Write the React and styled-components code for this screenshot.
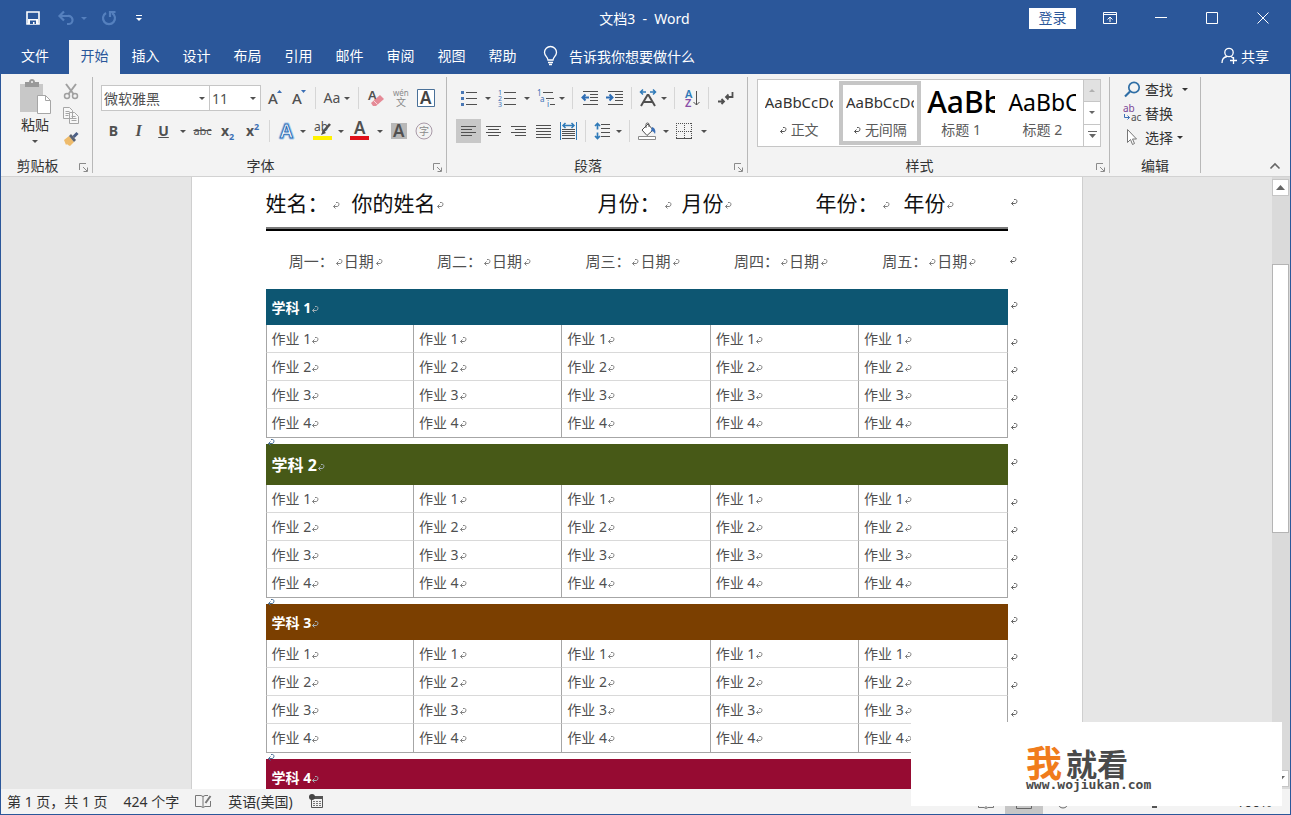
import { Fragment } from "react";
import styled, { createGlobalStyle, css } from "styled-components";

const GlobalStyle = createGlobalStyle`
  * {
    box-sizing: border-box;
  }

  body {
    margin: 0;
    font-family: "Noto Sans", "Noto Sans CJK SC", sans-serif;
    font-size: 14px;
    color: #333;
  }

  button, input, select {
    font: inherit;
    color: inherit;
    border: 0;
    padding: 0;
    background: none;
  }
`;

const Window = styled.div`
  display: flex;
  flex-direction: column;
  height: 100vh;
  border: 1px solid #2b579a;
  background-color: #e6e6e6;
  overflow: hidden;
`;

/* ---------- title bar ---------- */

const TitleBar = styled.header`
  display: grid;
  grid-template-columns: 1fr auto 1fr;
  align-items: center;
  height: 36px;
  padding: 0 2px 2px 0;
  background-color: #2b579a;
  color: white;
`;

const QuickAccess = styled.div`
  display: flex;
  align-items: center;
  padding-left: 20px;
`;

const QuickButton = styled.button`
  display: flex;
  align-items: center;
  justify-content: center;
  gap: 7px;
  width: ${(p) => p.$w || 24}px;
  height: 28px;
  color: ${(p) => (p.$dim ? "#5580be" : "white")};
`;

const Title = styled.h1`
  margin: 0;
  font-size: 14px;
  font-weight: 400;
  white-space: pre;
`;

const WindowButtons = styled.div`
  display: flex;
  align-items: center;
  justify-content: flex-end;
`;

const Login = styled.button`
  width: 47px;
  height: 21px;
  margin-right: 8px;
  line-height: 20px;
  background-color: white;
  color: #2b579a;
`;

const WindowButton = styled.button`
  display: flex;
  align-items: center;
  justify-content: center;
  width: 51px;
  height: 34px;
`;

/* ---------- tabs ---------- */

const Tabs = styled.nav`
  display: flex;
  align-items: stretch;
  height: 37px;
  padding-top: 3px;
  background-color: #2b579a;
  color: white;
`;

const Tab = styled.button`
  width: ${(p) => (p.$file ? 68 : 51)}px;
  padding-bottom: 5px;

  ${(p) =>
    p.$active &&
    css`
      background-color: #f3f3f3;
      color: #2b579a;
    `}
`;

const TellMe = styled.label`
  display: flex;
  align-items: center;
  gap: 11px;
  flex: 1;
  padding: 0 0 2px 15px;
`;

const TellInput = styled.input`
  flex: 1;
  min-width: 0;
  outline: 0;

  &::placeholder {
    color: white;
    opacity: 1;
  }
`;

const Share = styled.button`
  display: flex;
  align-items: center;
  gap: 3px;
  padding: 0 21px 2px 0;
`;

/* ---------- ribbon ---------- */

const Ribbon = styled.section`
  display: flex;
  padding: 3px 0;
  background-color: #f3f3f3;
  border-bottom: 1px solid #d2d2d2;
`;

const Group = styled.div`
  display: flex;
  flex-direction: column;
  flex: none;
  width: ${(p) => p.$w}px;
  height: 96px;
  border-right: 1px solid #b8b8b8;
`;

const GroupBody = styled.div`
  display: flex;
  flex-direction: ${(p) => (p.$row ? "row" : "column")};
  flex: 1;
  gap: ${(p) => p.$gap || 0}px;
  padding: ${(p) => p.$pad || "8px 8px 0"};
`;

const GroupFooter = styled.div`
  display: flex;
  align-items: center;
  height: 14px;
  line-height: 14px;
`;

const GroupLabel = styled.span`
  flex: 1;
  text-align: center;
`;

const Launcher = styled.button`
  display: flex;
  justify-content: center;
  width: 18px;
  padding-top: 3px;
`;

const Row = styled.div`
  display: flex;
  align-items: center;
  height: 26px;
`;

const Separator = styled.i`
  width: 1px;
  height: 22px;
  margin: 0 4px;
  background-color: #d6d6d6;
`;

const Tool = styled.button`
  display: flex;
  align-items: center;
  justify-content: center;
  gap: ${(p) => p.$gap || 4}px;
  flex: none;
  width: ${(p) => p.$w || 25}px;
  height: 24px;
  color: #505050;
  white-space: nowrap;
  background-color: ${(p) => (p.$on ? "#c8c8c8" : "transparent")};
`;

const Letter = styled.span`
  font-size: ${(p) => p.$size || 14}px;
  font-weight: ${(p) => (p.$bold ? 700 : 400)};
  font-style: ${(p) => (p.$italic ? "italic" : "normal")};
  font-family: ${(p) => (p.$serif ? '"Liberation Serif", serif' : "inherit")};
  text-decoration: ${(p) => p.$line || "none"};
  line-height: 18px;

  sub, sup {
    font-size: 9px;
    line-height: 0;
    color: #3b6fb5;
  }
`;

const Combo = styled.label`
  display: flex;
  align-items: center;
  width: ${(p) => p.$w}px;
  height: 26px;
  padding: 0 4px 0 2px;
  margin-right: -1px;
  border: 1px solid #c6c6c6;
  background-color: white;
  color: #505050;
`;

const ComboSelect = styled.select`
  flex: 1;
  min-width: 0;
  appearance: none;
  outline: 0;
`;

const ComboEnd = styled.span`
  width: 3px;
`;

const Paste = styled.button`
  display: flex;
  flex-direction: column;
  align-items: center;
  width: 42px;
  color: #505050;
`;

const PasteLabel = styled.span`
  margin-bottom: 5px;
  line-height: 20px;
  color: #333;
`;

const ToolColumn = styled.div`
  display: flex;
  flex-direction: column;
`;

const Gallery = styled.div`
  display: flex;
  height: 68px;
  border: 1px solid #c6c6c6;
  background-color: white;
`;

const StyleCard = styled.button`
  display: flex;
  flex-direction: column;
  align-items: center;
  justify-content: space-between;
  flex: 1;
  min-width: 0;
  margin: 1px 0;
  padding: 0 2px 1px;
  border: 4px solid ${(p) => (p.$on ? "#c6c6c6" : "transparent")};
`;

const Preview = styled.span`
  width: 68px;
  height: 34px;
  line-height: 34px;
  overflow: hidden;
  text-align: left;
  white-space: nowrap;
  font-size: ${(p) => p.$size}px;
  font-weight: ${(p) => (p.$size > 26 ? 500 : 400)};
  color: ${(p) => (p.$size > 20 ? "#000" : "#333")};
`;

const StyleName = styled.span`
  display: flex;
  align-items: center;
  gap: 4px;
  font-size: 14px;
  line-height: 20px;
  white-space: nowrap;
  color: #5a5a5a;
`;

const GalleryScroll = styled.div`
  display: flex;
  flex-direction: column;
  width: 17px;
  border-left: 1px solid #c6c6c6;
`;

const GalleryArrow = styled.button`
  display: flex;
  flex-direction: column;
  align-items: center;
  justify-content: center;
  gap: 2px;
  flex: 1;
  color: ${(p) => (p.disabled ? "#b0b0b0" : "#666")};
  background-color: ${(p) => (p.disabled ? "#e1e1e1" : "white")};

  & + & {
    border-top: 1px solid #c6c6c6;
  }
`;

const EditButton = styled.button`
  display: flex;
  align-items: center;
  gap: 4px;
  height: 24px;
`;

const EditIcon = styled.span`
  display: flex;
  align-items: center;
  justify-content: center;
  width: 18px;
`;

const EditText = styled.span`
  margin-right: ${(p) => (p.$wide ? 5 : 0)}px;
`;

const Collapse = styled.button`
  align-self: flex-end;
  width: 18px;
  height: 18px;
  margin: 0 6px 0 auto;
  color: #666;
`;

/* ---------- document ---------- */

const Workspace = styled.main`
  display: flex;
  flex: 1;
  min-height: 0;
`;

const Canvas = styled.div`
  flex: 1;
  min-width: 0;
  overflow: hidden;
`;

const Page = styled.article`
  width: 890px;
  max-width: 100%;
  min-height: 100%;
  margin: 0 auto;
  padding: 0 58px 0 74px;
  background-color: white;
  box-shadow: 0 0 0 1px #cfcfcf;
`;

const MarkSvg = styled.svg`
  width: 8px;
  height: 8px;
  flex: none;
  color: ${(p) => p.$color || "#808080"};
`;

const PageHead = styled.div`
  display: grid;
  grid-template-columns: 86fr 246fr 84fr 134fr 88fr 104fr 16px;
  align-items: center;
  height: 50px;
  font-size: 21px;
  color: #111;
`;

const MarkedText = styled.span`
  display: flex;
  align-items: center;
  gap: ${(p) => p.$gap || 0}px;
  white-space: nowrap;

  ${MarkSvg} {
    margin-top: 6px;
  }
`;

const LineEnd = styled.span`
  display: flex;
  padding-left: 2px;
`;

const Rule = styled.hr`
  height: 4px;
  margin: 0 16px 0 0;
  border: 0;
  border-top: 2px solid #7a7a7a;
  border-bottom: 2px solid #000;
`;

const Weekdays = styled.div`
  display: grid;
  grid-template-columns: repeat(5, 1fr) 16px;
  align-items: center;
  height: 58px;
  font-size: 15px;
  color: #505050;
`;

const Weekday = styled.span`
  display: flex;
  align-items: center;
  justify-content: center;
  gap: 1px;
  padding-right: 8px;
  white-space: nowrap;

  ${MarkSvg} {
    margin-top: 4px;
  }
`;

const Subject = styled.table`
  width: 100%;
  table-layout: fixed;
  border-spacing: 0;
`;

const MarkCol = styled.col`
  width: 16px;
`;

const SubjectTitle = styled.th`
  height: ${(p) => (p.$large ? 41 : 36)}px;
  padding: 0 6px 1px;
  text-align: left;
  font-size: ${(p) => (p.$large ? 16 : 14)}px;
  color: white;
  background-color: ${(p) => p.$color};
`;

const Task = styled.td`
  height: 28px;
  padding: 0 5px;
  line-height: 20px;
  color: #505050;
  border-right: 1px solid #a6a6a6;
  border-bottom: 1px solid #d9d9d9;

  &:first-child {
    border-left: 1px solid #a6a6a6;
  }

  tr:last-child > & {
    height: 29px;
    border-bottom-color: #a6a6a6;
  }
`;

const RowEnd = styled.td`
  padding: ${(p) => (p.$head ? "0 0 6px 2px" : "4px 0 0 2px")};
  line-height: 8px;
`;

const Between = styled.div`
  height: 6px;
  padding-left: 1px;
  line-height: 0;
`;

const ScrollBar = styled.aside`
  display: flex;
  flex-direction: column;
  width: 18px;
  padding: 2px 1px 2px 0;
  background-color: #dadada;
`;

const ScrollArrow = styled.button`
  display: flex;
  align-items: center;
  justify-content: center;
  height: 17px;
  border: 1px solid #c6c6c6;
  background-color: white;
  color: #666;
`;

const Track = styled.div`
  flex: ${(p) => p.$grow};
`;

const Thumb = styled.div`
  flex: 269;
  border: 1px solid #b4b4b4;
  background-color: white;
`;

/* ---------- status bar ---------- */

const StatusBar = styled.footer`
  display: flex;
  align-items: center;
  height: 25px;
  padding: 0 6px;
  background-color: #f3f3f3;
  white-space: nowrap;
`;

const StatusLeft = styled.div`
  display: flex;
  align-items: center;
  gap: 16px;
  flex: 1;
  padding-bottom: 2px;
`;

const StatusRight = styled.div`
  display: flex;
  align-items: center;
  padding-right: 12px;
`;

const ViewButton = styled.button`
  display: flex;
  align-items: center;
  justify-content: center;
  width: 38px;
  height: 25px;
  background-color: ${(p) => (p.$on ? "#c6c6c6" : "transparent")};
`;

const Zoom = styled.input`
  width: 110px;
  height: 14px;
  margin: 0 27px 0 18px;
  appearance: none;
  background: linear-gradient(#8a8a8a, #8a8a8a) center / 100% 1px no-repeat;

  &::-webkit-slider-thumb {
    appearance: none;
    width: 5px;
    height: 13px;
    background-color: #555;
  }
`;

const Watermark = styled.div`
  position: fixed;
  right: 9px;
  bottom: 9px;
  display: flex;
  flex-direction: column;
  width: 371px;
  height: 84px;
  padding: 28px 0 0 115px;
  background-color: white;
  color: #4a4a4a;
`;

const Brand = styled.div`
  display: flex;
  align-items: center;
  gap: 4px;
  height: 28px;
  font-size: 31px;
  font-weight: 700;
  line-height: 28px;
`;

const BrandAccent = styled.span`
  font-size: 36px;
  color: #f07c1c;
`;

const Site = styled.span`
  font-family: "DejaVu Sans Mono", monospace;
  font-size: 13px;
  font-weight: 700;
  line-height: 14px;
`;

/* ---------- icons ---------- */

const Drawing = styled.svg`
  flex: none;
  overflow: visible;
`;

const Svg = ({ w = 20, h = w, children }) => (
  <Drawing
    width={w}
    height={h}
    viewBox={`0 0 ${w} ${h}`}
    fill="none"
    stroke="currentColor"
    aria-hidden="true"
  >
    {children}
  </Drawing>
);

const Caret = () => (
  <Svg w={6} h={3}>
    <path d="M0 0h6L3 3z" fill="currentColor" stroke="none" />
  </Svg>
);

const Mark = ({ color }) => (
  <MarkSvg $color={color} viewBox="0 0 8 8" fill="none" stroke="currentColor">
    <path d="M4 1.500h1.500c2 0 2 4-.5 4H1.500M3.500 3.500l-2 2 2 2" />
  </MarkSvg>
);

const Lines = ({ rows }) => (
  <path d={rows.map(([x, y, w]) => `M${x} ${y}.5h${w}`).join("")} />
);

const SaveIcon = () => (
  <Svg w={16}>
    <path d="M2 2h12v12H2z" strokeWidth="1.600" />
    <path d="M3 9h10v5H3z" fill="currentColor" stroke="none" />
    <path d="M5 10.500h6V14H9.500v-2H8v2H5z" fill="#2b579a" stroke="none" />
  </Svg>
);

const UndoIcon = () => (
  <Svg w={16}>
    <path d="M2 6h8a4 4 0 0 1 1 8H9M6 1.500L1.500 6 6 10.500" strokeWidth="2.200" />
  </Svg>
);

const RedoIcon = () => (
  <Svg w={16}>
    <path d="M5 3a6 6 0 1 0 6 0M9 7V2h5.500" strokeWidth="2.200" />
  </Svg>
);

const CustomizeIcon = () => (
  <Svg w={6} h={6}>
    <path d="M0 .5h6" />
    <path d="M0 3h6L3 6z" fill="currentColor" stroke="none" />
  </Svg>
);

const RibbonModeIcon = () => (
  <Svg w={14} h={12}>
    <path d="M.5.5h13v11H.5zM.5 2.500h13M7 10V5M4.500 7.500L7 5l2.500 2.500" />
  </Svg>
);

const BulbIcon = () => (
  <Svg w={15} h={20}>
    <path
      d="M5 14c0-3-3.500-4-3.500-7.500a6 6 0 0 1 12 0C13.500 10 10 11 10 14zM5 16.500h5M6 18.500h3"
      strokeWidth="1.300"
    />
  </Svg>
);

const PersonIcon = () => (
  <Svg w={17} h={18}>
    <circle cx="8" cy="5.500" r="4.200" strokeWidth="1.300" />
    <path d="M1 16c0-4 2-6 5-6.500M10 9.500l2 1.500M12.500 10v7M9 13.500h7" strokeWidth="1.300" />
  </Svg>
);

const PasteIcon = () => (
  <Svg w={32} h={36}>
    <path d="M1 5h23v28H1z" fill="#c8c8c8" stroke="none" />
    <path d="M6 3h4c0-4 6-4 6 0h4v5H6z" fill="#999" stroke="none" />
    <circle cx="13" cy="3" r="1" fill="#f3f3f3" stroke="none" />
    <path d="M18.500 16.500h8l5 5v13h-13z" fill="white" stroke="#a6a6a6" />
    <path d="M26.500 16.500v5h5" stroke="#a6a6a6" />
  </Svg>
);

const CutIcon = () => (
  <Svg w={16} h={17}>
    <path d="M3 1l7.500 10M13 1L5.500 11" stroke="#a0a0a0" strokeWidth="2" />
    <circle cx="4" cy="13" r="2.500" stroke="#a0a0a0" strokeWidth="1.500" />
    <circle cx="12" cy="13" r="2.500" stroke="#a0a0a0" strokeWidth="1.500" />
  </Svg>
);

const CopyIcon = () => (
  <Svg w={16} h={17}>
    <g stroke="#a6a6a6" fill="#f8f8f8">
      <path d="M.5.5h6l3 3v8h-9zM6.500 5.500h5l4 4v7h-9z" />
      <path d="M2.500 4.500h4M2.500 6.500h4M2.500 8.500h3M8.500 9.500h4M8.500 11.500h5M8.500 13.500h5" />
    </g>
  </Svg>
);

const BrushIcon = () => (
  <Svg w={16} h={16}>
    <path d="M1 9l5-4 5 6-4 4-2-1-1-1-1 1z" fill="#eebb6b" stroke="none" />
    <path d="M6 5l2-2 5 6-2 2z" fill="#5b6270" stroke="none" />
    <path d="M10.500 6l4-4" stroke="#4b5f86" strokeWidth="3" />
  </Svg>
);

const LauncherIcon = () => (
  <Svg w={9} h={9}>
    <path d="M.5 7V.5H7M4 4l4 4M8.500 4.500v4h-4" stroke="#8a8a8a" />
  </Svg>
);

const GrowIcon = ({ down }) => (
  <Svg w={20}>
    <text x="3" y="16" fontSize="15" fontWeight="500" fill="currentColor" stroke="none">A</text>
    <path d={down ? "M12 2h5l-2.500 3z" : "M12 5h5l-2.500-3z"} fill="#3b6fb5" stroke="none" />
  </Svg>
);

const ClearIcon = () => (
  <Svg w={20}>
    <text x="2" y="12" fontSize="13" fontWeight="600" fill="currentColor" stroke="none">A</text>
    <path d="M5 15l9-8 4 4-8 7h-3z" fill="#e58a96" stroke="none" />
    <path d="M7.500 12.500l4 4" stroke="#f6d5d9" />
  </Svg>
);

const PhoneticIcon = () => (
  <Svg w={20}>
    <g fill="#8a8a8a" stroke="none">
      <text x="2" y="8" fontSize="8">wén</text>
      <text x="5" y="18" fontSize="10">文</text>
    </g>
  </Svg>
);

const BorderedIcon = () => (
  <Svg w={20}>
    <path d="M1.500 1.500h17v17h-17z" fill="white" stroke="#4a7199" />
    <text x="4" y="16" fontSize="17" fontWeight="600" fill="#444" stroke="none">A</text>
  </Svg>
);

const EffectIcon = () => (
  <Svg w={15} h={18}>
    <g fontSize="19" fontWeight="600" strokeLinejoin="round">
      <text x="1" y="16" fill="none" stroke="#a9cbee" strokeWidth="3">A</text>
      <text x="1" y="16" fill="white" stroke="#2f6eb5" strokeWidth="1">A</text>
    </g>
  </Svg>
);

const HighlightIcon = () => (
  <Svg w={19} h={20}>
    <text x="1" y="10" fontSize="12" fill="currentColor" stroke="none">ab</text>
    <path d="M17 3l-7 8" strokeWidth="2.600" />
    <path d="M10 9l3 3-5 2z" fill="currentColor" stroke="none" />
    <path d="M0 15h19v4H0z" fill="#fff200" stroke="none" />
  </Svg>
);

const FontColorIcon = () => (
  <Svg w={19} h={20}>
    <text x="4" y="13" fontSize="17" fontWeight="600" fill="currentColor" stroke="none">A</text>
    <path d="M0 15h19v4H0z" fill="#e0101a" stroke="none" />
  </Svg>
);

const ShadeIcon = () => (
  <Svg w={16}>
    <path d="M0 0h16v16H0z" fill="#b8b8b8" stroke="none" />
    <text x="2" y="14" fontSize="17" fontWeight="600" fill="#505050" stroke="none">A</text>
  </Svg>
);

const CircledIcon = () => (
  <Svg w={18}>
    <circle cx="9" cy="9" r="8" stroke="#a99aa8" />
    <text x="4" y="13" fontSize="10" fill="#8a8a8a" stroke="none">字</text>
  </Svg>
);

const BulletIcon = () => (
  <Svg w={19} h={16}>
    <Lines rows={[[6, 2, 11], [6, 8, 11], [6, 14, 11]]} />
    <path d="M1 1h3v3H1zM1 7h3v3H1zM1 13h3v3H1z" fill="#4a78b5" stroke="none" />
  </Svg>
);

const NumberIcon = () => (
  <Svg w={19} h={18}>
    <Lines rows={[[6, 3, 12], [6, 9, 12], [6, 15, 12]]} />
    <g fill="#3b6fb5" stroke="none" fontSize="7">
      <text x="0" y="6">1</text>
      <text x="0" y="12">2</text>
      <text x="0" y="18">3</text>
    </g>
  </Svg>
);

const MultiIcon = () => (
  <Svg w={18} h={18}>
    <Lines rows={[[6, 3, 10], [9, 9, 8], [13, 15, 5]]} />
    <g fill="#3b6fb5" stroke="none" fontSize="8">
      <text x="0" y="7">1</text>
      <text x="3" y="13">a</text>
      <text x="10" y="18">i</text>
    </g>
  </Svg>
);

const IndentIcon = ({ left }) => (
  <Svg w={18} h={16}>
    <Lines rows={[[2, 1, 15], [9, 4, 8], [9, 7, 8], [9, 10, 8], [2, 14, 15]]} />
    <path
      d={left ? "M8 7.500H1.500M4.500 4.500l-3 3 3 3" : "M0 7.500h6.500M3.500 4.500l3 3-3 3"}
      stroke="#2f6eb5"
      strokeWidth="2"
    />
  </Svg>
);

const AsianIcon = () => (
  <Svg w={18} h={18}>
    <path d="M2 17L8.500 6h1L16 17M4.500 13h9" strokeWidth="2" />
    <path d="M7 3H1.500M4 .5L1.500 3 4 5.500M11 3h5.500M14 .5L16.500 3 14 5.500" stroke="#2f7ab8" strokeWidth="1.500" />
  </Svg>
);

const SortIcon = () => (
  <Svg w={17} h={20}>
    <g stroke="none" fontSize="11" fontWeight="600">
      <text x="2" y="10" fill="#2f7ab8">A</text>
      <text x="2" y="19" fill="#8a4fa8">Z</text>
    </g>
    <path d="M13.500 3v14M10.500 14l3 3 3-3" />
  </Svg>
);

const ShowMarksIcon = () => (
  <Svg w={17} h={16}>
    <path d="M15.500 2v5H9M11.500 4.500L9 7l2.500 2.500M1 11.500h6M4.500 9L7 11.500 4.500 14" strokeWidth="1.800" />
  </Svg>
);

const AlignIcon = ({ kind }) => {
  const rows = [0, 3, 6, 9, 12].map((y, i) => {
    const w = kind === "full" || i % 2 === 0 ? 15 : 11;
    const x = kind === "right" ? 15 - w : kind === "center" ? (15 - w) / 2 : 0;
    return [x, y, w];
  });
  return (
    <Svg w={15} h={kind === "full" ? 13 : 10}>
      <Lines rows={kind === "full" ? rows : rows.slice(0, 4)} />
    </Svg>
  );
};

const DistributeIcon = () => (
  <Svg w={17} h={18}>
    <path d="M.5 0v18M16.500 0v18" stroke="#2f7ab8" />
    <path d="M3 3.500h11M5.500 1L3 3.500 5.500 6M11.500 1L14 3.500 11.500 6" stroke="#2f7ab8" strokeWidth="1.500" />
    <Lines rows={[[2, 7, 13], [2, 9, 13], [2, 11, 13], [2, 13, 13], [2, 16, 13]]} />
  </Svg>
);

const SpacingIcon = () => (
  <Svg w={16} h={18}>
    <path d="M3.500 1.500v6M1 4l2.500-2.500L6 4M3.500 10.500v6M1 14l2.500 2.500L6 14" stroke="#2f7ab8" strokeWidth="1.700" />
    <Lines rows={[[7, 2, 9], [7, 6, 9], [7, 10, 9], [7, 14, 9]]} />
  </Svg>
);

const BucketIcon = () => (
  <Svg w={19} h={20}>
    <path d="M4 9l6-6 5 6-6 5.500zM8 7V3.500a1.500 1.500 0 0 1 3 0V6" fill="white" />
    <path d="M14 6c3 1 4 4 3 7-1-2-2-3-4-3z" fill="#3b6fb5" stroke="none" />
    <path d="M.5 15.500h17v3H.5z" fill="white" stroke="#8a8a8a" />
  </Svg>
);

const BordersIcon = () => (
  <Svg w={17} h={17}>
    <path d="M.5 0v16M8.500 0v16M15.500 0v16M0 .5h16M0 8.500h16" strokeDasharray="1 1" />
    <path d="M0 15.500h16" />
  </Svg>
);

const FindIcon = () => (
  <Svg w={17} h={17}>
    <circle cx="10" cy="6.500" r="5.200" stroke="#2f6ea5" strokeWidth="1.700" />
    <path d="M6 10.500L1 15.500" stroke="#2f6ea5" strokeWidth="2.200" />
  </Svg>
);

const ReplaceIcon = () => (
  <Svg w={18} h={18}>
    <g stroke="none" fontSize="10">
      <text x="0" y="8" fill="#7a4596">ab</text>
      <text x="8" y="17" fill="#505050">ac</text>
    </g>
    <path d="M1.500 10v3.500h5M4.500 11.500l2 2-2 2" stroke="#3b6fb5" />
  </Svg>
);

const SelectIcon = () => (
  <Svg w={12} h={18}>
    <path d="M1.500 1.500v13l3-3 2 5 2-1-2-4.500h4z" fill="white" stroke="#777" />
  </Svg>
);

const ProofIcon = () => (
  <Svg w={17} h={14}>
    <path d="M8 2v11M8 2.500L6 1.500H.5v11H6l2 1 2-1h5.500V7M8 2.500l2-1h3" stroke="#777" />
    <path d="M15.500 2l-5 7" stroke="#777" strokeWidth="2" />
  </Svg>
);

const MacroIcon = () => (
  <Svg w={14} h={14}>
    <path d="M2.500 4.500h11v9h-11z" stroke="#555" />
    <path d="M5 2h9v3H5z" fill="#555" stroke="none" />
    <circle cx="3" cy="3" r="3" fill="#444" stroke="none" />
    <path d="M4 7.500h8M4 9.500h8M4 11.500h8" stroke="#777" strokeDasharray="2 1" />
  </Svg>
);

/* ---------- data ---------- */

const tabs = ["开始", "插入", "设计", "布局", "引用", "邮件", "审阅", "视图", "帮助"];

const weekdays = ["周一：", "周二：", "周三：", "周四：", "周五："];

const subjects = [
  { name: "学科 1", color: "#0d5672" },
  { name: "学科 2", color: "#475917", large: true },
  { name: "学科 3", color: "#7b3f00" },
  { name: "学科 4", color: "#960b32" },
];

const tasks = ["作业 1", "作业 2", "作业 3", "作业 4"];

const styles = [
  { name: "正文", sample: "AaBbCcDc", size: 15, mark: true },
  { name: "无间隔", sample: "AaBbCcDc", size: 15, mark: true, on: true },
  { name: "标题 1", sample: "AaBb", size: 30 },
  { name: "标题 2", sample: "AaBbC", size: 23 },
];

/* ---------- parts ---------- */

const RibbonGroup = ({ label, width, launcher = true, children }) => (
  <Group $w={width}>
    {children}
    <GroupFooter>
      <GroupLabel>{label}</GroupLabel>
      {launcher && (
        <Launcher aria-label={`${label}设置`}>
          <LauncherIcon />
        </Launcher>
      )}
    </GroupFooter>
  </Group>
);

const ClipboardGroup = () => (
  <RibbonGroup label="剪贴板" width={92}>
    <GroupBody $row $pad="2px 8px 0 13px" $gap={2}>
      <Paste>
        <PasteIcon />
        <PasteLabel>粘贴</PasteLabel>
        <Caret />
      </Paste>
      <ToolColumn>
        <Tool aria-label="剪切"><CutIcon /></Tool>
        <Tool aria-label="复制"><CopyIcon /></Tool>
        <Tool aria-label="格式刷"><BrushIcon /></Tool>
      </ToolColumn>
    </GroupBody>
  </RibbonGroup>
);

const FontGroup = () => (
  <RibbonGroup label="字体" width={354}>
    <GroupBody $gap={7}>
      <Row>
        <Combo $w={109}>
          <ComboSelect aria-label="字体"><option>微软雅黑</option></ComboSelect>
          <Caret />
        </Combo>
        <Combo $w={52}>
          <ComboSelect aria-label="字号"><option>11</option></ComboSelect>
          <Caret />
        </Combo>
        <ComboEnd />
        <Tool $w={24} aria-label="增大字号"><GrowIcon /></Tool>
        <Tool $w={24} aria-label="减小字号"><GrowIcon down /></Tool>
        <Separator />
        <Tool $w={34}><Letter>Aa</Letter><Caret /></Tool>
        <Separator />
        <Tool aria-label="清除格式"><ClearIcon /></Tool>
        <Tool aria-label="拼音指南"><PhoneticIcon /></Tool>
        <Tool aria-label="字符边框"><BorderedIcon /></Tool>
      </Row>
      <Row>
        <Tool><Letter $bold>B</Letter></Tool>
        <Tool><Letter $bold $italic $serif $size={16}>I</Letter></Tool>
        <Tool><Letter $bold $line="underline">U</Letter></Tool>
        <Tool $w={14} aria-label="下划线样式"><Caret /></Tool>
        <Tool><Letter $line="line-through" $size={11}>abc</Letter></Tool>
        <Tool><Letter $bold>x<sub>2</sub></Letter></Tool>
        <Tool><Letter $bold>x<sup>2</sup></Letter></Tool>
        <Separator />
        <Tool $w={36} $gap={6} aria-label="文本效果"><EffectIcon /><Caret /></Tool>
        <Tool $w={36} $gap={6} aria-label="突出显示"><HighlightIcon /><Caret /></Tool>
        <Tool $w={40} $gap={8} aria-label="字体颜色"><FontColorIcon /><Caret /></Tool>
        <Tool aria-label="字符底纹"><ShadeIcon /></Tool>
        <Tool aria-label="带圈字符"><CircledIcon /></Tool>
      </Row>
    </GroupBody>
  </RibbonGroup>
);

const ParagraphGroup = () => (
  <RibbonGroup label="段落" width={301}>
    <GroupBody $gap={7} $pad="8px 8px 0 9px">
      <Row>
        <Tool $w={38} $gap={6} aria-label="项目符号"><BulletIcon /><Caret /></Tool>
        <Tool $w={40} $gap={7} aria-label="编号"><NumberIcon /><Caret /></Tool>
        <Tool $w={34} aria-label="多级列表"><MultiIcon /><Caret /></Tool>
        <Separator />
        <Tool aria-label="减少缩进量"><IndentIcon left /></Tool>
        <Tool aria-label="增加缩进量"><IndentIcon /></Tool>
        <Separator />
        <Tool $w={34} aria-label="中文版式"><AsianIcon /><Caret /></Tool>
        <Separator />
        <Tool aria-label="排序"><SortIcon /></Tool>
        <Separator />
        <Tool aria-label="显示编辑标记"><ShowMarksIcon /></Tool>
      </Row>
      <Row>
        <Tool $on aria-label="左对齐"><AlignIcon kind="left" /></Tool>
        <Tool aria-label="居中"><AlignIcon kind="center" /></Tool>
        <Tool aria-label="右对齐"><AlignIcon kind="right" /></Tool>
        <Tool aria-label="两端对齐"><AlignIcon kind="full" /></Tool>
        <Tool aria-label="分散对齐"><DistributeIcon /></Tool>
        <Separator />
        <Tool $w={35} $gap={6} aria-label="行距"><SpacingIcon /><Caret /></Tool>
        <Separator />
        <Tool $w={38} $gap={6} aria-label="底纹"><BucketIcon /><Caret /></Tool>
        <Tool $w={38} $gap={8} aria-label="边框"><BordersIcon /><Caret /></Tool>
      </Row>
    </GroupBody>
  </RibbonGroup>
);

const StylesGroup = () => (
  <RibbonGroup label="样式" width={362}>
    <GroupBody $pad="2px 8px 0 9px">
      <Gallery>
        {styles.map((s) => (
          <StyleCard key={s.name} $on={s.on}>
            <Preview $size={s.size}>{s.sample}</Preview>
            <StyleName>
              {s.mark && <Mark color="#555" />}
              {s.name}
            </StyleName>
          </StyleCard>
        ))}
        <GalleryScroll>
          <GalleryArrow disabled aria-label="上一行">
            <Svg w={6} h={3}><path d="M0 3h6L3 0z" fill="currentColor" stroke="none" /></Svg>
          </GalleryArrow>
          <GalleryArrow aria-label="下一行"><Caret /></GalleryArrow>
          <GalleryArrow aria-label="其他样式">
            <Svg w={9} h={8}>
              <path d="M0 .5h9" />
              <path d="M1 3h7L4.500 7z" fill="currentColor" stroke="none" />
            </Svg>
          </GalleryArrow>
        </GalleryScroll>
      </Gallery>
    </GroupBody>
  </RibbonGroup>
);

const EditingGroup = () => (
  <RibbonGroup label="编辑" width={91} launcher={false}>
    <GroupBody $pad="0 0 0 13px">
      <EditButton>
        <EditIcon><FindIcon /></EditIcon>
        <EditText $wide>查找</EditText>
        <Caret />
      </EditButton>
      <EditButton>
        <EditIcon><ReplaceIcon /></EditIcon>
        <EditText>替换</EditText>
      </EditButton>
      <EditButton>
        <EditIcon><SelectIcon /></EditIcon>
        <EditText>选择</EditText>
        <Caret />
      </EditButton>
    </GroupBody>
  </RibbonGroup>
);

const SubjectTable = ({ name, color, large }) => (
  <Subject>
    <colgroup>
      {weekdays.map((d) => <col key={d} />)}
      <MarkCol />
    </colgroup>
    <tbody>
      <tr>
        <SubjectTitle colSpan={5} $color={color} $large={large}>
          {name}
          <Mark color="#a3afb5" />
        </SubjectTitle>
        <RowEnd $head><Mark color="#666" /></RowEnd>
      </tr>
      {tasks.map((task) => (
        <tr key={task}>
          {weekdays.map((d) => (
            <Task key={d}>
              {task}
              <Mark />
            </Task>
          ))}
          <RowEnd><Mark color="#666" /></RowEnd>
        </tr>
      ))}
    </tbody>
  </Subject>
);

const App = () => {
  return (
    <Window>
      <GlobalStyle />
      <TitleBar>
        <QuickAccess>
          <QuickButton aria-label="保存"><SaveIcon /></QuickButton>
          <QuickButton $dim $w={54} aria-label="撤消"><UndoIcon /><Caret /></QuickButton>
          <QuickButton $dim $w={20} aria-label="恢复"><RedoIcon /></QuickButton>
          <QuickButton $w={40} aria-label="自定义快速访问工具栏"><CustomizeIcon /></QuickButton>
        </QuickAccess>
        <Title>{"文档3  -  Word"}</Title>
        <WindowButtons>
          <Login>登录</Login>
          <WindowButton aria-label="功能区显示选项"><RibbonModeIcon /></WindowButton>
          <WindowButton aria-label="最小化"><Svg w={12}><path d="M0 5.500h12" /></Svg></WindowButton>
          <WindowButton aria-label="最大化"><Svg w={12}><path d="M.5.5h11v11H.5z" /></Svg></WindowButton>
          <WindowButton aria-label="关闭"><Svg w={12}><path d="M.5.5l11 11M11.500.5l-11 11" /></Svg></WindowButton>
        </WindowButtons>
      </TitleBar>

      <Tabs>
        <Tab $file>文件</Tab>
        {tabs.map((t) => (
          <Tab key={t} $active={t === "开始"}>{t}</Tab>
        ))}
        <TellMe>
          <BulbIcon />
          <TellInput placeholder="告诉我你想要做什么" aria-label="告诉我你想要做什么" />
        </TellMe>
        <Share><PersonIcon />共享</Share>
      </Tabs>

      <Ribbon>
        <ClipboardGroup />
        <FontGroup />
        <ParagraphGroup />
        <StylesGroup />
        <EditingGroup />
        <Collapse aria-label="折叠功能区">
          <Svg w={12} h={8}><path d="M1.500 6.500L6 2l4.500 4.500" strokeWidth="1.600" /></Svg>
        </Collapse>
      </Ribbon>

      <Workspace>
        <Canvas>
          <Page>
            <PageHead>
              <MarkedText $gap={3}>姓名：<Mark /></MarkedText>
              <MarkedText>你的姓名<Mark /></MarkedText>
              <MarkedText $gap={3}>月份：<Mark /></MarkedText>
              <MarkedText>月份<Mark /></MarkedText>
              <MarkedText $gap={3}>年份：<Mark /></MarkedText>
              <MarkedText>年份<Mark /></MarkedText>
              <LineEnd><Mark color="#666" /></LineEnd>
            </PageHead>
            <Rule />
            <Weekdays>
              {weekdays.map((d) => (
                <Weekday key={d}>{d}<Mark /> 日期<Mark /></Weekday>
              ))}
              <LineEnd><Mark color="#666" /></LineEnd>
            </Weekdays>
            {subjects.map((s) => (
              <Fragment key={s.name}>
                <SubjectTable {...s} />
                <Between><Mark color="#4a7199" /></Between>
              </Fragment>
            ))}
          </Page>
        </Canvas>
        <ScrollBar>
          <ScrollArrow aria-label="向上滚动"><Svg w={9} h={5}><path d="M0 5h9L4.500 0z" fill="currentColor" stroke="none" /></Svg></ScrollArrow>
          <Track $grow={68} />
          <Thumb />
          <Track $grow={238} />
          <ScrollArrow aria-label="向下滚动"><Svg w={9} h={5}><path d="M0 0h9L4.500 5z" fill="currentColor" stroke="none" /></Svg></ScrollArrow>
        </ScrollBar>
      </Workspace>

      <StatusBar>
        <StatusLeft>
          <span>第 1 页，共 1 页</span>
          <span>424 个字</span>
          <ProofIcon />
          <span>英语(美国)</span>
          <MacroIcon />
        </StatusLeft>
        <StatusRight>
          <ViewButton aria-label="阅读视图"><ProofIcon /></ViewButton>
          <ViewButton $on aria-label="页面视图"><Svg w={16} h={14}><path d="M.5.5h15v13H.5zM3 4.500h10M3 7.500h10" stroke="#666" /></Svg></ViewButton>
          <ViewButton aria-label="Web 版式视图"><Svg w={16} h={14}><circle cx="9" cy="8" r="5" stroke="#666" /><path d="M1 .5h12M1 3.500h4" stroke="#666" /></Svg></ViewButton>
          <Zoom type="range" min="10" max="190" defaultValue="100" aria-label="缩放" />
          <span>100%</span>
        </StatusRight>
      </StatusBar>

      <Watermark>
        <Brand><BrandAccent>我</BrandAccent>就看</Brand>
        <Site>www.wojiukan.com</Site>
      </Watermark>
    </Window>
  );
};

export default App;
